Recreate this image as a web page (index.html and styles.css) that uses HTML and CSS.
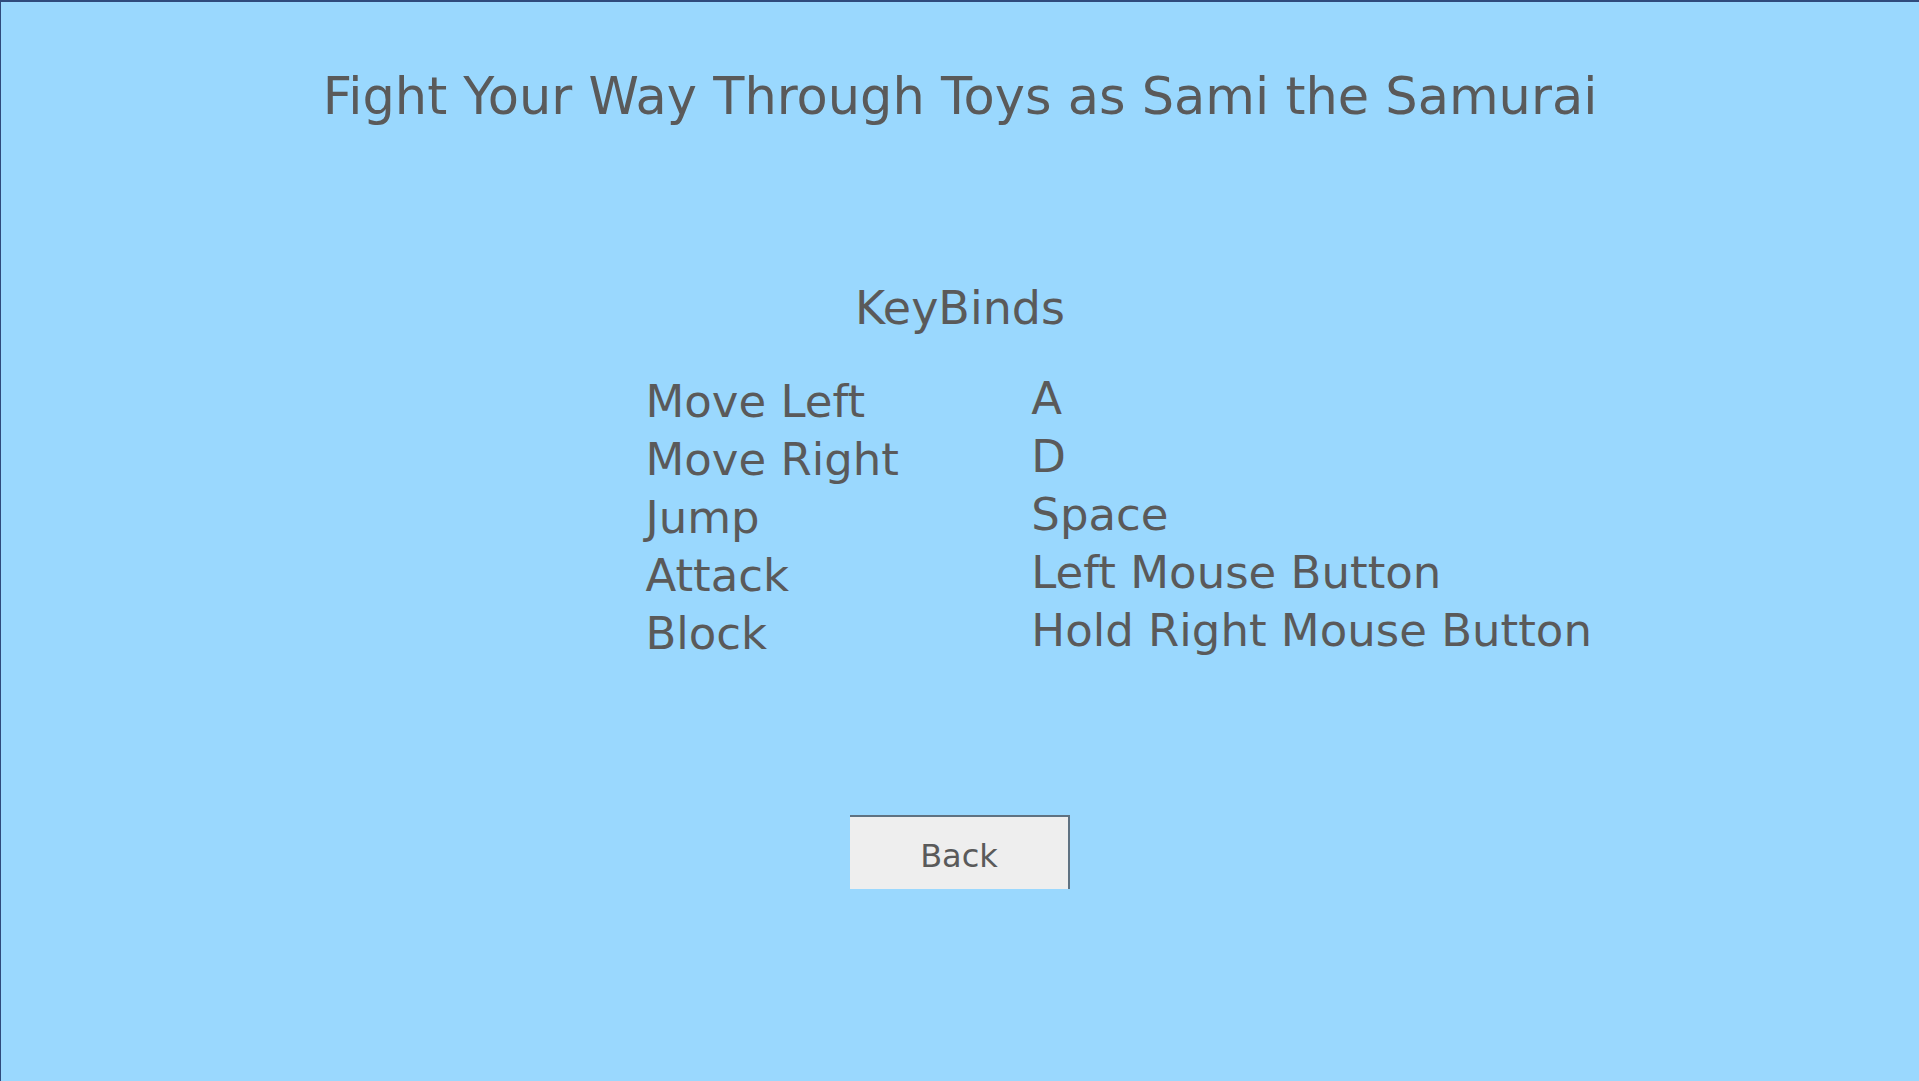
FILE: index.html
```
<!DOCTYPE html>
<html lang="en">
<head>
<meta charset="utf-8">
<title>Sami the Samurai</title>
<meta name="viewport" content="width=device-width, initial-scale=1">
<link rel="stylesheet" href="styles.css">
</head>
<body>
<main class="screen">
  <h1 class="title">Fight Your Way Through Toys as Sami the Samurai</h1>
  <h2 class="subtitle" id="keybinds">KeyBinds</h2>
  <table class="binds" aria-labelledby="keybinds">
    <tbody>
      <tr><th scope="row">Move Left</th><td>A</td></tr>
      <tr><th scope="row">Move Right</th><td>D</td></tr>
      <tr><th scope="row">Jump</th><td>Space</td></tr>
      <tr><th scope="row">Attack</th><td>Left Mouse Button</td></tr>
      <tr><th scope="row">Block</th><td>Hold Right Mouse Button</td></tr>
    </tbody>
  </table>
  <button class="back" type="button">Back</button>
</main>
</body>
</html>
```
FILE: styles.css
```
* {
  box-sizing: border-box;
}

body {
  margin: 0;
  background: #9ad8fe;
  color: #5a5a5a;
  font-family: "DejaVu Sans", sans-serif;
}

.screen {
  display: flex;
  flex-direction: column;
  align-items: center;
  min-height: 100vh;
  padding: 66px 0 64px;
  border-top: 2px solid #2f4a7c;
  border-left: 1px solid #2f4a7c;
}

.title,
.subtitle {
  margin: 0;
  font-weight: 400;
  line-height: 58px;
  text-align: center;
}

.title {
  font-size: 51px;
}

.subtitle {
  margin-top: 153px;
  font-size: 46px;
}

.binds {
  width: 100%;
  margin-top: 36px;
  padding-left: 33.6%;
  border-collapse: separate;
  border-spacing: 0;
  table-layout: fixed;
  font-size: 45px;
  line-height: 52px;
}

.binds th,
.binds td {
  height: 58px;
  padding: 0;
  font-weight: 400;
  text-align: left;
  vertical-align: top;
  white-space: nowrap;
}

.binds th {
  width: 30.3%;
  padding-top: 3px;
}

.back {
  width: 220px;
  height: 74px;
  margin-top: 152px;
  padding: 6px 0 0;
  border: 0 solid #5f7282;
  border-top-width: 2px;
  border-right-width: 2px;
  background: #eee;
  color: inherit;
  font: 32px/40px "DejaVu Sans", sans-serif;
}
```
